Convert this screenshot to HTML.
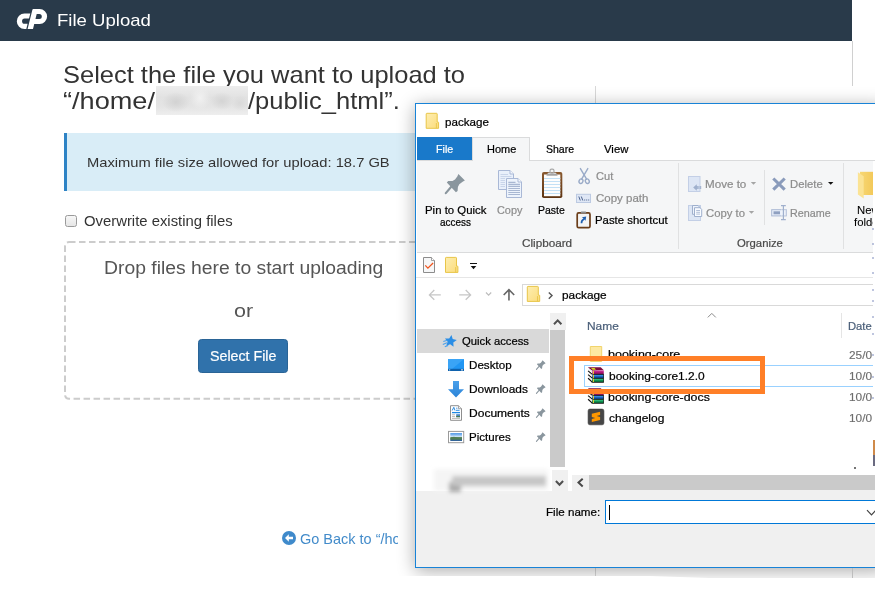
<!DOCTYPE html>
<html lang="en">
<head>
<meta charset="utf-8">
<title>File Upload</title>
<style>
html,body{margin:0;padding:0;background:#fff;}
body{width:875px;height:598px;position:relative;overflow:hidden;font-family:"Liberation Sans","DejaVu Sans",sans-serif;color:#333;}
.abs{position:absolute;}
.t{position:absolute;white-space:nowrap;line-height:1;transform-origin:0 0;}
svg{position:absolute;overflow:visible;}
/* ---------- cPanel page ---------- */
#hdr{left:0;top:0;width:852px;height:41px;background:#293a4a;}
#vline1{left:852px;top:41px;width:1px;height:45px;background:#d0d0d0;}
#vline2{left:595px;top:86px;width:1px;height:490px;background:#d8d8d8;}
#blur1{z-index:5;left:156px;top:86px;width:92px;height:29px;background:radial-gradient(ellipse 14px 10px at 20px 16px,#d2d2d2,rgba(210,210,210,0) 100%),radial-gradient(ellipse 12px 9px at 66px 15px,#d4d4d4,rgba(212,212,212,0) 100%),radial-gradient(ellipse 10px 12px at 44px 12px,#f1f1f1,rgba(241,241,241,0) 100%),radial-gradient(ellipse 9px 8px at 84px 17px,#d9d9d9,rgba(217,217,217,0) 100%),linear-gradient(#ececec,#e2e2e2 40%,#e4e4e4 70%,#eeeeee);}
#alert{left:64px;top:133px;width:380px;height:58px;background:#d9edf7;border-left:3px solid #2e83c5;box-sizing:border-box;}
#cb{left:64.5px;top:215px;width:12px;height:12px;border:1px solid #9a9a9a;border-radius:2.5px;background:linear-gradient(#f7f7f7,#e6e6e6);box-sizing:border-box;}
#btn{left:198px;top:339px;width:90px;height:34px;background:#3072ab;border:1px solid #2a6496;border-radius:3.5px;box-sizing:border-box;}
#backclip{left:270px;top:520px;width:128px;height:40px;overflow:hidden;}
/* ---------- Explorer dialog ---------- */
#dlg{left:415px;top:103px;width:470px;height:465px;background:#fff;border:1px solid #1883d7;box-sizing:border-box;box-shadow:0 3px 17px rgba(0,0,0,.33);}
#tabfile{left:417px;top:137px;width:55px;height:23px;background:#1979ca;}
#tabhome{left:472px;top:137px;width:58px;height:24px;background:#f5f6f7;border:1px solid #dadbdc;border-bottom:none;box-sizing:border-box;}
#ribbon{left:417px;top:160px;width:458px;height:93px;background:#f5f6f7;border-top:1px solid #dadbdc;border-bottom:1px solid #dadbdc;box-sizing:border-box;}
.vsep{width:1px;background:#e0e1e2;}
#qatline{left:416px;top:277px;width:459px;height:1px;background:#e6e6e6;}
#addr{left:522px;top:284px;width:360px;height:22px;border:1px solid #d9d9d9;box-sizing:border-box;background:#fff;}
#navsel{left:417px;top:329px;width:132px;height:24px;background:#d9d9d9;}
#nsb{left:550px;top:313px;width:16px;height:17px;background:#f0f0f0;}
#nsb2{left:552px;top:470px;width:16px;height:21px;background:#f0f0f0;}
#nsbthumb{left:550px;top:330px;width:15px;height:137px;background:#cacaca;}
#hsb{left:572px;top:475px;width:303px;height:16px;background:#f0f0f0;}
#hsbthumb{left:589px;top:475px;width:286px;height:15px;background:#cacaca;}
#foot{left:416px;top:491px;width:459px;height:76px;background:#f0f0f0;}
#fname{left:605px;top:500px;width:280px;height:24px;border:1px solid #0078d7;background:#fff;box-sizing:border-box;}
#caret{left:609px;top:505px;width:1px;height:15px;background:#000;}
#selrow{left:584px;top:365px;width:300px;height:22px;border:1px solid #99d1ff;background:#fff;box-sizing:border-box;}
#orange{left:569px;top:356px;width:196px;height:38px;border:5px solid #ff7f27;box-sizing:border-box;}
#rstrip{left:873px;top:161px;width:2px;height:279px;background:#fff;}
#blur2{left:440px;top:474px;width:105px;height:14px;}
</style>
</head>
<body>
<!-- cPanel header -->
<div id="hdr" class="abs"></div>
<svg style="left:12px;top:4px" width="40" height="30" viewBox="12 4 40 30"><path fill="#fff" d="M30.300 13.500H24.500A7.700 7.700 0 0 0 24.500 28.900H26.300L27.600 23.700H24.600A2.550 2.550 0 0 1 24.600 18.600H29Z"/><path fill="#fff" d="M33.300 9H39.600A7.500 7.500 0 0 1 39.600 24H34.200L35.450 19H39.300A2.500 2.500 0 0 0 39.300 14H36.700L33 28.900H27.600L32.400 9.700Q32.600 9 33.300 9Z"/></svg>
<div id="vline1" class="abs"></div>
<div id="vline2" class="abs"></div>
<div id="blur1" class="abs"></div>
<div id="alert" class="abs"></div>
<div id="cb" class="abs"></div>
<svg style="left:64px;top:241px" width="400" height="160"><rect x="1" y="1" width="398" height="156.800" rx="4" fill="none" stroke="#cccccc" stroke-width="2" stroke-dasharray="6.500 3.500"/></svg>
<div id="btn" class="abs"></div>
<div id="backclip" class="abs">
  <svg style="left:12px;top:11px" width="14" height="14" viewBox="0 0 14 14"><circle cx="7" cy="7" r="7" fill="#3f8acb"/><path d="M6.800 3.300 3 7l3.800 3.700V8.300H11V5.700H6.800Z" fill="#fff"/></svg>
</div>

<!-- Explorer dialog -->
<div id="dlg" class="abs"></div>
<div id="tabfile" class="abs"></div>
<div id="ribbon" class="abs"></div>
<div id="tabhome" class="abs"></div>
<div class="abs vsep" style="left:678px;top:163px;height:86px"></div>
<div class="abs vsep" style="left:764px;top:170px;height:55px"></div>
<div class="abs vsep" style="left:843px;top:163px;height:86px"></div>
<div id="qatline" class="abs"></div>
<div id="addr" class="abs"></div>
<div id="navsel" class="abs"></div>
<div id="nsb" class="abs"></div>
<div id="nsb2" class="abs"></div>
<div id="nsbthumb" class="abs"></div>
<div class="abs vsep" style="left:841px;top:313px;height:25px;background:#e5e5e5"></div>
<div id="selrow" class="abs"></div>
<div id="hsb" class="abs"></div>
<div id="hsbthumb" class="abs"></div>
<div id="foot" class="abs"></div>
<div id="fname" class="abs"></div>
<div id="caret" class="abs"></div>
<svg style="left:0;top:0" width="875" height="598" viewBox="0 0 875 598">
<defs>
  <linearGradient id="gf" x1="0" y1="0" x2="1" y2="1"><stop offset="0" stop-color="#feeeb0"/><stop offset="1" stop-color="#fbdc7c"/></linearGradient>
  <linearGradient id="gbrown" x1="0" y1="0" x2="0" y2="1"><stop offset="0" stop-color="#8a5a30"/><stop offset="1" stop-color="#5e3412"/></linearGradient>
  <linearGradient id="gnf" x1="0" y1="0" x2="1" y2="0"><stop offset="0" stop-color="#f7d774"/><stop offset="1" stop-color="#f3c95a"/></linearGradient>
    </defs>
<!-- title folder -->
<g transform="translate(425.700 112.800)">
    <path d="M.5 1.200Q.5 .5 1.200 .5H10.800Q11.500 .5 11.500 1.200V9.200H12.300Q12.900 9.200 12.900 9.800V15.500H.5Z" fill="url(#gf)" stroke="#e8c548" stroke-width="1"/>
    <path d="M10.700 15.300V10.200" stroke="#e8c548" stroke-width=".9" fill="none"/></g>
<!-- big pin -->
<g transform="translate(444.900 173.700)">
    <path d="M13.500 .3 20 6.700 18.100 7.800 14.400 10.600 13 13.300 12.700 17.300 11 18.500 1.900 8.900 3.300 7.300 7.600 7.200 10.100 5.800 12.400 2.800Z" fill="#8a969e"/>
    <path d="M6.800 12.600 .9 19.400" stroke="#8a969e" stroke-width="2.200" stroke-linecap="round"/></g>
<!-- copy icon -->
<g stroke="#a9b8d6" stroke-width="1" fill="#e9f0fb">
  <path d="M498.500 170.500H510L513.500 174V189.500H498.500Z"/>
  <path d="M510 170.500V174H513.500" fill="#f6f9fe"/>
</g>
<g stroke="#c9d5ea" stroke-width="1"><path d="M500.500 174.500H508M500.500 176.500H511.500M500.500 178.500H505M500.500 180.500H505M500.500 182.500H505M500.500 184.500H505M500.500 186.500H505"/></g>
<g stroke="#a9b8d6" stroke-width="1" fill="#edf3fc">
  <path d="M506.500 178.500H518L521.500 182V197.500H506.500Z"/>
  <path d="M518 178.500V182H521.500" fill="#f8fbff"/>
</g>
<g stroke="#a8b7d2" stroke-width="1.100"><path d="M508.300 182.400H515.500M508.300 184.400H520M508.300 186.400H520M508.300 188.500H520M508.300 190.500H520M508.300 192.500H520M508.300 194.500H520"/></g>
<!-- paste icon -->
<rect x="542" y="172" width="20.300" height="26" rx="1.800" fill="url(#gbrown)"/>
<rect x="544" y="174.500" width="16.300" height="21.700" fill="#fdfdfd"/>
<g stroke="#c3e0f5" stroke-width="1"><path d="M544 178.500H560.300M544 181.500H560.300M544 184.500H560.300M544 187.500H560.300M544 190.500H560.300M544 193.500H560.300"/></g>
<path d="M546.300 175.700 548 172.700H556L557.700 175.700Z" fill="#a4a4a4"/>
<path d="M547.500 174 548.500 172.700H555.500L556.500 174Z" fill="#d6d6d6"/>
<rect x="550" y="169.200" width="4" height="4" rx="1.600" fill="none" stroke="#a8a8a8" stroke-width="1.200"/>
<!-- scissors -->
<g fill="none" stroke="#9aabc8" stroke-width="1.400" stroke-linecap="round">
  <path d="M580.400 168.600 586.600 179.200"/><path d="M587.800 168.600 581.600 179.200"/>
  <ellipse cx="581" cy="181.200" rx="1.900" ry="2.300" transform="rotate(25 581 181.200)"/>
  <ellipse cx="587.300" cy="181.200" rx="1.900" ry="2.300" transform="rotate(-25 587.300 181.200)"/>
</g>
<!-- copy path -->
<rect x="576.500" y="194.300" width="14" height="8.200" fill="#dfe7f5" stroke="#bccae2" stroke-width="1"/>
<g stroke="#4d648f" stroke-width="1" fill="none"><path d="M578.800 196.500 580.300 200.500M581.300 196.500 582.800 200.500"/><path d="M584.200 200H585.200M586.200 200H587.200M588.200 200H589.200" stroke-width="1.100"/></g>
<!-- paste shortcut -->
<rect x="577.200" y="212.900" width="12.800" height="14.800" rx="1.500" fill="#f4f4f4" stroke="#6b3e1a" stroke-width="1.700"/>
<rect x="580.800" y="211.600" width="5.400" height="1.800" rx=".6" fill="#8a8a8a"/>
<path d="M581.500 223.300Q581.300 220.300 584 219" fill="none" stroke="#1f5fb0" stroke-width="1.700"/>
<path d="M586.200 216.600 582 217.300 585.500 220.800Z" fill="#1f5fb0"/>
<!-- move to -->
<rect x="688.500" y="176.500" width="11.500" height="15" fill="#dde6f5" stroke="#c3cfe6" stroke-width="1"/>
<path d="M693.200 187.400 696.800 184.200V186H701.200V189H696.800V190.700Z" fill="#9fb0cd"/>
<path d="M698.200 186V189M699.700 186V189" stroke="#dde6f5" stroke-width=".5"/>
<!-- copy to -->
<rect x="688.500" y="205.500" width="12" height="15" fill="#dde6f5" stroke="#c3cfe6" stroke-width="1"/>
<path d="M692.500 205.500H698L699.700 207.200V214.300H692.500Z" fill="#eef3fb" stroke="#9fb0cd" stroke-width="1"/>
<path d="M694.500 207.700H700L701.700 209.400V216.500H694.500Z" fill="#f8fbff" stroke="#9fb0cd" stroke-width="1"/>
<path d="M696.200 210.500H700M696.200 212.300H700M696.200 214.100H700" stroke="#a9b8d2" stroke-width=".9"/>
<!-- dropdown arrows -->
<path d="M750.800 182H756.200L753.500 184.800Z" fill="#a5a5a5"/>
<path d="M748.800 211H754.200L751.500 213.800Z" fill="#a5a5a5"/>
<path d="M828 181.900H833.400L830.700 184.800Z" fill="#111"/>
<!-- delete X -->
<path d="M773.300 178.500 784.700 189.700M784.700 178.500 773.300 189.700" stroke="#8a9bbb" stroke-width="3.100" fill="none"/>
<!-- rename -->
<rect x="771.700" y="209.700" width="14.500" height="6.200" fill="#eaf0fb" stroke="#a8b7d3" stroke-width="1"/>
<rect x="773.500" y="211.300" width="6.500" height="3" fill="#8fa0c0"/>
<path d="M783.400 205.600V219.600M781 205.600H785.800M781 219.600H785.800" stroke="#a0b0cd" stroke-width="1.200" fill="none"/>
<path d="M781.800 209.200V216.400M785 209.200V216.400" stroke="#f5f6f7" stroke-width=".6"/>
<!-- new folder -->
<path d="M860 171.800H873V195H860Z" fill="url(#gnf)"/>
<path d="M857.900 172.200 863.700 176.300V198.600L857.900 194.500Z" fill="#fbe394"/>
<!-- QAT -->
<path d="M423.500 257.500H431.500L434.500 260.500V272.500H423.500Z" fill="#f6f7f8" stroke="#8c8c8c" stroke-width="1"/>
<path d="M431.500 257.500V260.500H434.500" fill="#fff" stroke="#8c8c8c" stroke-width=".8"/>
<path d="M425.300 265.400 427.900 268.100 433.100 263" fill="none" stroke="#f0561f" stroke-width="1.300"/>
<g transform="translate(445 256.900)">
    <path d="M.5 1.200Q.5 .5 1.200 .5H10.800Q11.500 .5 11.500 1.200V9.200H12.300Q12.900 9.200 12.900 9.800V15.500H.5Z" fill="url(#gf)" stroke="#e8c548" stroke-width="1"/>
    <path d="M10.700 15.300V10.200" stroke="#e8c548" stroke-width=".9" fill="none"/></g>
<rect x="470" y="263" width="7" height="1" fill="#111"/>
<path d="M470.700 265.900H476.300L473.500 269.200Z" fill="#111"/>
</svg>

<svg style="left:0;top:0" width="875" height="598" viewBox="0 0 875 598">
<defs>
  <linearGradient id="gdl" x1="0" y1="0" x2="0" y2="1"><stop offset="0" stop-color="#4aa0ea"/><stop offset="1" stop-color="#2b84d8"/></linearGradient>
  <linearGradient id="gsky" x1="0" y1="0" x2="0" y2="1"><stop offset="0" stop-color="#3f8fe6"/><stop offset=".45" stop-color="#cfe3f7"/><stop offset=".55" stop-color="#5d8a5c"/><stop offset=".8" stop-color="#3f6f7a"/><stop offset="1" stop-color="#2d5fa6"/></linearGradient>
</defs>
<!-- nav arrows -->
<g fill="none" stroke="#c6c6c6" stroke-width="1.300">
  <path d="M440.800 294.900H429.500M434.300 290 429.400 294.900 434.300 299.800"/>
  <path d="M459.200 294.900H470.500M465.700 290 470.600 294.900 465.700 299.800"/>
  <path d="M486 292.500 488.600 295.200 491.200 292.500" stroke="#bdbdbd" stroke-width="1.200"/>
</g>
<path d="M508.950 300.400V290M503.700 295 508.950 289.700 514.200 295" fill="none" stroke="#666" stroke-width="1.600"/>
<g transform="translate(526.800 285.900)">
    <path d="M.5 1.200Q.5 .5 1.200 .5H10.800Q11.500 .5 11.500 1.200V9.200H12.300Q12.900 9.200 12.900 9.800V15.500H.5Z" fill="url(#gf)" stroke="#e8c548" stroke-width="1"/>
    <path d="M10.700 15.300V10.200" stroke="#e8c548" stroke-width=".9" fill="none"/></g>
<path d="M548.800 292.500 552 295.600 548.800 298.700" fill="none" stroke="#555" stroke-width="1.400"/>
<!-- nav scrollbar arrows -->
<path d="M554 324.300 557.700 320.400 561.400 324.300" fill="none" stroke="#505050" stroke-width="2"/>
<path d="M555.900 481 559.500 484.800 563.100 481" fill="none" stroke="#505050" stroke-width="2"/>
<path d="M582.700 478.800 578.500 482.600 582.700 486.400" fill="none" stroke="#484848" stroke-width="2"/>
<!-- sort caret -->
<path d="M707.800 317.400 711.800 313.400 715.800 317.400" fill="none" stroke="#8a8a8a" stroke-width="1"/>
<!-- quick access star -->
<path d="M451.48 334.96 452.68 339.04 456.80 340.11 453.30 342.52 453.56 346.76 450.18 344.17 446.22 345.73 447.65 341.72 444.94 338.44 449.19 338.55Z" fill="#2b8ee6"/>
<path d="M447.300 340.200 443.300 341.500M447 342.800 442.800 344.500M448.200 345.400 444.800 346.700" stroke="#4da2ec" stroke-width="1.200" fill="none"/>
<!-- desktop -->
<rect x="448" y="359.100" width="16" height="11.900" fill="#2196f3"/>
<path d="M448 359.100H464L452 369H448Z" fill="#3aa4f6"/>
<rect x="448" y="368.800" width="16" height="2.200" fill="#0f62ad"/>
<path d="M449.200 369.900H450.200M461 369.900H463" stroke="#fff" stroke-width=".9"/>
<!-- downloads -->
<path d="M453 381H459V389.200H464L456 397.400 448 389.200H453Z" fill="url(#gdl)"/>
<!-- documents -->
<path d="M450.500 405.700H458.500L461.500 408.700V420.300H450.500Z" fill="#fff" stroke="#8f8f8f" stroke-width="1"/>
<path d="M458.500 405.700V408.700H461.500" fill="#f2f2f2" stroke="#8f8f8f" stroke-width=".8"/>
<path d="M452.200 410.500 453.800 407.300 455 410.500M456.200 408.200H457.400M456 410.300H459.600" stroke="#2b8be0" stroke-width="1" fill="none"/>
<path d="M452 412.600H460" stroke="#1e88e5" stroke-width="1.300"/>
<path d="M452 414.800H455M452 416.600H455M452 418.400H460" stroke="#b0b0b0" stroke-width=".9"/>
<rect x="456.200" y="414.200" width="3.800" height="3" fill="#4b86c2"/><rect x="456.200" y="416" width="3.800" height="1.200" fill="#4d7a4d"/>
<!-- pictures -->
<rect x="448.500" y="431.400" width="15.200" height="11.300" fill="#fff" stroke="#9a9a9a" stroke-width="1"/>
<rect x="450.300" y="433.100" width="11.700" height="7.900" fill="url(#gsky)"/>
<path d="M450.300 438.500Q453 435.800 456 437.200T462 438.600V439.600H450.300Z" fill="#4f7d55"/>
<!-- small pins -->
<g transform="translate(536 360) scale(.483)">
    <path d="M13.500 .3 20 6.700 18.100 7.800 14.400 10.600 13 13.300 12.700 17.300 11 18.500 1.900 8.900 3.300 7.300 7.600 7.200 10.100 5.800 12.400 2.800Z" fill="#8a969e"/>
    <path d="M6.800 12.600 .9 19.400" stroke="#8a969e" stroke-width="2.200" stroke-linecap="round"/></g>
<g transform="translate(536 384) scale(.483)">
    <path d="M13.500 .3 20 6.700 18.100 7.800 14.400 10.600 13 13.300 12.700 17.300 11 18.500 1.900 8.900 3.300 7.300 7.600 7.200 10.100 5.800 12.400 2.800Z" fill="#8a969e"/>
    <path d="M6.800 12.600 .9 19.400" stroke="#8a969e" stroke-width="2.200" stroke-linecap="round"/></g>
<g transform="translate(536 408) scale(.483)">
    <path d="M13.500 .3 20 6.700 18.100 7.800 14.400 10.600 13 13.300 12.700 17.300 11 18.500 1.900 8.900 3.300 7.300 7.600 7.200 10.100 5.800 12.400 2.800Z" fill="#8a969e"/>
    <path d="M6.800 12.600 .9 19.400" stroke="#8a969e" stroke-width="2.200" stroke-linecap="round"/></g>
<g transform="translate(536 432) scale(.483)">
    <path d="M13.500 .3 20 6.700 18.100 7.800 14.400 10.600 13 13.300 12.700 17.300 11 18.500 1.900 8.900 3.300 7.300 7.600 7.200 10.100 5.800 12.400 2.800Z" fill="#8a969e"/>
    <path d="M6.800 12.600 .9 19.400" stroke="#8a969e" stroke-width="2.200" stroke-linecap="round"/></g>
<!-- file name dropdown chevron -->
<path d="M867 510.200 871.500 514.800 876 510.200" fill="none" stroke="#444" stroke-width="1.200"/>
</svg>

<svg style="left:0;top:0" width="875" height="598" viewBox="0 0 875 598">
<defs>
  <filter id="bl2" x="-20%" y="-50%" width="140%" height="200%"><feGaussianBlur stdDeviation="2.200"/></filter>
  <filter id="bl1" x="-10%" y="-30%" width="120%" height="160%"><feGaussianBlur stdDeviation="1.600"/></filter>
  <linearGradient id="gmag" x1="0" y1="0" x2="0" y2="1"><stop offset="0" stop-color="#e066b8"/><stop offset=".35" stop-color="#c2208c"/><stop offset="1" stop-color="#7d0d4e"/></linearGradient>
  <linearGradient id="gblu" x1="0" y1="0" x2="0" y2="1"><stop offset="0" stop-color="#5aa8f2"/><stop offset=".4" stop-color="#1f6fd0"/><stop offset="1" stop-color="#0c3f8a"/></linearGradient>
  <linearGradient id="ggrn" x1="0" y1="0" x2="0" y2="1"><stop offset="0" stop-color="#4fd69a"/><stop offset=".4" stop-color="#12a05a"/><stop offset="1" stop-color="#06592e"/></linearGradient>
  </defs>
<!-- folder row 1 -->
<path d="M590.300 346.500H601.700V361.400H590.300Z" fill="#fde9a2" stroke="#f1d46c" stroke-width="1"/>
<!-- winrar icons -->
<g transform="translate(588 367)">
    <path d="M4.200 6.900H15.900V15.700H3.600Z" fill="#0d0d0d"/>
    <path d="M0 .300 4.300 3.700V15.200L.1 11.500Z" fill="#fff"/>
    <path d="M.1 3.900 4.300 7.400M.1 7.600 4.300 11.100M.1 11.300 4 14.900" stroke="#111" stroke-width="1.200" fill="none"/>
    <path d="M.6 2 4.200 5M.6 5.800 4.200 8.800M.6 9.600 4.200 12.600" stroke="#d0d0d0" stroke-width=".5" fill="none"/>
    <path d="M-.1 .2H12.700L15.800 3.300 4.300 3.700Z" fill="#7a0c3c"/>
    <path d="M3 .900H6.600L7.900 2.700H4.600Z" fill="#d6d822"/>
    <path d="M4.300 3.650 15.800 3.250V6.960H4.300Z" fill="url(#gmag)"/>
    <rect x="4.300" y="7.800" width="11" height="3.100" fill="url(#gblu)"/>
    <rect x="4.300" y="11.750" width="11" height="3.250" fill="url(#ggrn)"/>
    <path d="M5.450 3.700V6.960M5.450 7.800V10.900M5.450 11.750V15" stroke="#e8d030" stroke-width="1"/></g>
<g transform="translate(588 388)">
    <path d="M4.200 6.900H15.900V15.700H3.600Z" fill="#0d0d0d"/>
    <path d="M0 .300 4.300 3.700V15.200L.1 11.500Z" fill="#fff"/>
    <path d="M.1 3.900 4.300 7.400M.1 7.600 4.300 11.100M.1 11.300 4 14.900" stroke="#111" stroke-width="1.200" fill="none"/>
    <path d="M.6 2 4.200 5M.6 5.800 4.200 8.800M.6 9.600 4.200 12.600" stroke="#d0d0d0" stroke-width=".5" fill="none"/>
    <path d="M-.1 .2H12.700L15.800 3.300 4.300 3.700Z" fill="#7a0c3c"/>
    <path d="M3 .900H6.600L7.900 2.700H4.600Z" fill="#d6d822"/>
    <path d="M4.300 3.650 15.800 3.250V6.960H4.300Z" fill="url(#gmag)"/>
    <rect x="4.300" y="7.800" width="11" height="3.100" fill="url(#gblu)"/>
    <rect x="4.300" y="11.750" width="11" height="3.250" fill="url(#ggrn)"/>
    <path d="M5.450 3.700V6.960M5.450 7.800V10.900M5.450 11.750V15" stroke="#e8d030" stroke-width="1"/></g>
<!-- sublime -->
<rect x="588.100" y="409.100" width="15.800" height="15.700" rx="1.800" fill="#464646" stroke="#3b3b3b" stroke-width=".6"/>
<path d="M591.800 413.800 600.100 411.800V415L596.600 416 600.100 417.100V420.100L591.800 422.100V419L595.300 418.100 591.800 417Z" fill="#ff9800"/>
<!-- blurred nav item -->
<g filter="url(#bl2)"><rect x="434" y="469" width="114" height="22" fill="#f5f5f5"/><rect x="449" y="482" width="12" height="10" fill="#a8a8a8"/><rect x="452" y="476" width="94" height="10" fill="#c6c6c6"/></g>
</svg>

<span class="t" style="left:57.03px;top:11.5px;font-size:17px;color:#fff;transform:scaleX(1.0912);">File Upload</span>
<span class="t" style="left:62.91px;top:63.0px;font-size:24px;color:#333;transform:scaleX(1.0610);">Select the file you want to upload to</span>
<span class="t" style="left:63.17px;top:88.6px;font-size:24px;color:#333;transform:scaleX(1.1296);">“/home/</span>
<span class="t" style="left:248.37px;top:88.6px;font-size:24px;color:#333;transform:scaleX(1.0637);">/public_html”.</span>
<span class="t" style="left:86.68px;top:155.9px;font-size:13.5px;color:#333;transform:scaleX(1.0902);">Maximum file size allowed for upload: 18.7 GB</span>
<span class="t" style="left:83.86px;top:213.7px;font-size:14px;color:#333;transform:scaleX(1.0609);">Overwrite existing files</span>
<span class="t" style="left:104.27px;top:259.7px;font-size:17.5px;color:#555;transform:scaleX(1.1044);">Drop files here to start uploading</span>
<span class="t" style="left:233.68px;top:302.5px;font-size:17.5px;color:#555;transform:scaleX(1.2299);">or</span>
<span class="t" style="left:209.84px;top:349.2px;font-size:14px;color:#fff;transform:scaleX(1.0165);-webkit-text-stroke:.2px;">Select File</span>
<div class="abs" style="left:0;top:528px;width:398px;height:24.5px;overflow:hidden"><span class="t" style="left:300.04px;top:4.3px;font-size:14.5px;color:#428bca;transform:scaleX(0.9987);">Go Back to “/home</span></div>
<span class="t" style="left:444.83px;top:116.9px;font-size:11.5px;color:#000;transform:scaleX(1.0105);-webkit-text-stroke:.22px;">package</span>
<span class="t" style="left:435.58px;top:143.8px;font-size:11.5px;color:#fff;transform:scaleX(0.9326);-webkit-text-stroke:.22px;">File</span>
<span class="t" style="left:486.56px;top:143.8px;font-size:11.5px;color:#000;transform:scaleX(0.9535);-webkit-text-stroke:.22px;">Home</span>
<span class="t" style="left:545.92px;top:143.8px;font-size:11.5px;color:#000;transform:scaleX(0.9151);-webkit-text-stroke:.22px;">Share</span>
<span class="t" style="left:603.76px;top:143.8px;font-size:11.5px;color:#000;transform:scaleX(0.9871);-webkit-text-stroke:.22px;">View</span>
<span class="t" style="left:424.52px;top:204.9px;font-size:11.5px;color:#000;transform:scaleX(0.9907);-webkit-text-stroke:.22px;">Pin to Quick</span>
<span class="t" style="left:439.8px;top:217.2px;font-size:11.5px;color:#000;transform:scaleX(0.8656);-webkit-text-stroke:.22px;">access</span>
<span class="t" style="left:496.7px;top:204.9px;font-size:11.5px;color:#8c8c8c;transform:scaleX(0.9474);-webkit-text-stroke:.22px;">Copy</span>
<span class="t" style="left:538.11px;top:204.9px;font-size:11.5px;color:#000;transform:scaleX(0.9123);-webkit-text-stroke:.22px;">Paste</span>
<span class="t" style="left:595.79px;top:170.9px;font-size:11.5px;color:#8c8c8c;transform:scaleX(0.9620);-webkit-text-stroke:.22px;">Cut</span>
<span class="t" style="left:595.77px;top:192.9px;font-size:11.5px;color:#8c8c8c;transform:scaleX(0.9992);-webkit-text-stroke:.22px;">Copy path</span>
<span class="t" style="left:595.32px;top:214.5px;font-size:11.5px;color:#000;transform:scaleX(0.9883);-webkit-text-stroke:.22px;">Paste shortcut</span>
<span class="t" style="left:521.96px;top:237.5px;font-size:11.5px;color:#4a4a4a;transform:scaleX(1.0182);-webkit-text-stroke:.22px;">Clipboard</span>
<span class="t" style="left:705.28px;top:178.9px;font-size:11.5px;color:#8c8c8c;transform:scaleX(1.0100);-webkit-text-stroke:.22px;">Move to</span>
<span class="t" style="left:705.78px;top:207.9px;font-size:11.5px;color:#8c8c8c;transform:scaleX(0.9820);-webkit-text-stroke:.22px;">Copy to</span>
<span class="t" style="left:790.31px;top:178.9px;font-size:11.5px;color:#8c8c8c;transform:scaleX(0.9825);-webkit-text-stroke:.22px;">Delete</span>
<span class="t" style="left:790.38px;top:207.9px;font-size:11.5px;color:#8c8c8c;transform:scaleX(0.9369);-webkit-text-stroke:.22px;">Rename</span>
<span class="t" style="left:737.1px;top:237.5px;font-size:11.5px;color:#4a4a4a;transform:scaleX(0.9838);-webkit-text-stroke:.22px;">Organize</span>
<span class="t" style="left:562.11px;top:289.6px;font-size:11.5px;color:#000;transform:scaleX(1.0271);-webkit-text-stroke:.22px;">package</span>
<span class="t" style="left:461.9px;top:335.6px;font-size:11.5px;color:#000;transform:scaleX(0.9797);-webkit-text-stroke:.22px;">Quick access</span>
<span class="t" style="left:469.28px;top:359.9px;font-size:11.5px;color:#000;transform:scaleX(1.0094);-webkit-text-stroke:.22px;">Desktop</span>
<span class="t" style="left:469.25px;top:384.0px;font-size:11.5px;color:#000;transform:scaleX(1.0351);-webkit-text-stroke:.22px;">Downloads</span>
<span class="t" style="left:469.24px;top:407.8px;font-size:11.5px;color:#000;transform:scaleX(1.0459);-webkit-text-stroke:.22px;">Documents</span>
<span class="t" style="left:469.31px;top:431.6px;font-size:11.5px;color:#000;transform:scaleX(1.0028);-webkit-text-stroke:.22px;">Pictures</span>
<span class="t" style="left:587.45px;top:320.8px;font-size:11.5px;color:#4c607a;transform:scaleX(1.0365);-webkit-text-stroke:.22px;">Name</span>
<span class="t" style="left:848.32px;top:320.8px;font-size:11.5px;color:#4c607a;transform:scaleX(0.9774);-webkit-text-stroke:.22px;">Date</span>
<span class="t" style="left:608.47px;top:349.0px;font-size:11.5px;color:#000;transform:scaleX(1.0867);-webkit-text-stroke:.22px;">booking-core</span>
<span class="t" style="left:608.51px;top:370.6px;font-size:11.5px;color:#000;transform:scaleX(1.0395);-webkit-text-stroke:.22px;">booking-core1.2.0</span>
<span class="t" style="left:608.48px;top:391.6px;font-size:11.5px;color:#000;transform:scaleX(1.0770);-webkit-text-stroke:.22px;">booking-core-docs</span>
<span class="t" style="left:608.69px;top:412.5px;font-size:11.5px;color:#000;transform:scaleX(1.0427);-webkit-text-stroke:.22px;">changelog</span>
<span class="t" style="left:546.2px;top:506.6px;font-size:11.5px;color:#000;transform:scaleX(1.0099);-webkit-text-stroke:.22px;">File name:</span>
<div class="abs" style="left:845px;top:200px;width:28px;height:32px;overflow:hidden">
  <span class="t" style="left:12.400px;top:4.900px;font-size:11.500px;color:#000;-webkit-text-stroke:.08px;transform:scaleX(.985)">New</span>
  <span class="t" style="left:8.600px;top:17.200px;font-size:11.500px;color:#000;-webkit-text-stroke:.08px;transform:scaleX(.985)">folder</span>
</div>
<div class="abs" style="left:845px;top:345px;width:27px;height:85px;overflow:hidden">
  <span class="t" style="left:3.800px;top:5px;font-size:11.500px;color:#6d6d6d;transform:scaleX(1.03);-webkit-text-stroke:.15px">25/07/2019 10:30</span>
  <span class="t" style="left:3.800px;top:26px;font-size:11.500px;color:#6d6d6d;transform:scaleX(1.03);-webkit-text-stroke:.15px">10/07/2019 11:12</span>
  <span class="t" style="left:3.800px;top:46.800px;font-size:11.500px;color:#6d6d6d;transform:scaleX(1.03);-webkit-text-stroke:.15px">10/07/2019 11:12</span>
  <span class="t" style="left:3.800px;top:67.700px;font-size:11.500px;color:#6d6d6d;transform:scaleX(1.03);-webkit-text-stroke:.15px">10/07/2019 11:10</span>
</div>

<div id="orange" class="abs"></div>
<div id="rstrip" class="abs"></div>
<div class="abs" style="left:872px;top:228px;width:2px;height:2px;background:#8a98c4;opacity:.55"></div><div class="abs" style="left:872px;top:243px;width:2px;height:2px;background:#8a98c4;opacity:.55"></div><div class="abs" style="left:872px;top:257px;width:2px;height:2px;background:#8a98c4;opacity:.55"></div><div class="abs" style="left:872px;top:272px;width:2px;height:2px;background:#8a98c4;opacity:.55"></div><div class="abs" style="left:872px;top:289px;width:2px;height:2px;background:#8a98c4;opacity:.55"></div><div class="abs" style="left:872px;top:300px;width:2px;height:2px;background:#8a98c4;opacity:.55"></div><div class="abs" style="left:872px;top:316px;width:2px;height:2px;background:#8a98c4;opacity:.55"></div><div class="abs" style="left:872px;top:333px;width:2px;height:2px;background:#8a98c4;opacity:.55"></div><div class="abs" style="left:872px;top:354px;width:2px;height:2px;background:#8a98c4;opacity:.55"></div><div class="abs" style="left:872px;top:376px;width:2px;height:2px;background:#8a98c4;opacity:.55"></div><div class="abs" style="left:872px;top:397px;width:2px;height:2px;background:#8a98c4;opacity:.55"></div>
<div class="abs" style="left:873px;top:440px;width:2px;height:15px;background:#cf8a4a"></div><div class="abs" style="left:873px;top:455px;width:2px;height:11px;background:#6a6a80"></div><div class="abs" style="left:854px;top:467px;width:2px;height:2px;background:#444;border-radius:1px"></div>
<div class="abs" style="left:852px;top:568px;width:1px;height:10px;background:#bdbdbd"></div>
<svg style="left:0;top:570px" width="875" height="28" viewBox="0 570 875 28"><path d="M0 576H650L710 578H875V598H0Z" fill="#fff"/></svg>
</body>
</html>
